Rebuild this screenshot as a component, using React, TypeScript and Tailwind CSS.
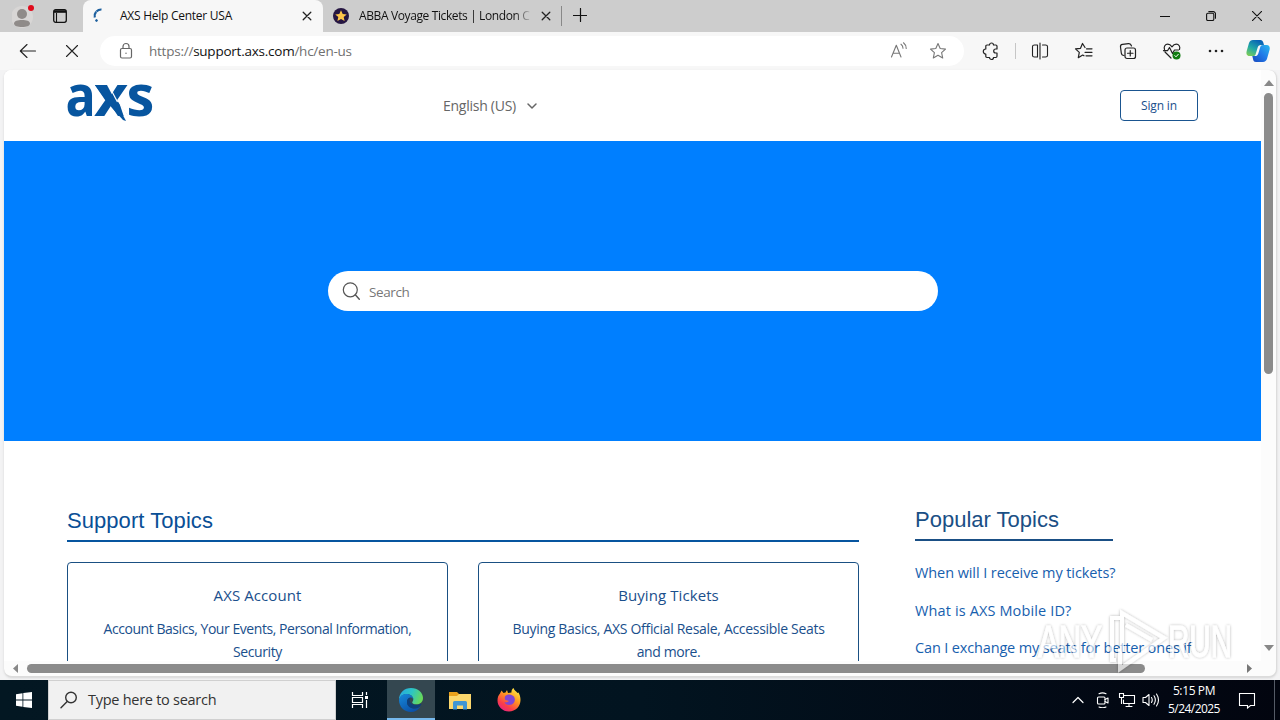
import React from "react";

type IconProps = { className?: string; children: React.ReactNode; size?: number };

function Icon({ className = "", children, size = 20 }: IconProps) {
  return (
    <svg
      width={size}
      height={size}
      viewBox={`0 0 ${size} ${size}`}
      fill="none"
      stroke="currentColor"
      strokeWidth="1.1"
      strokeLinecap="round"
      strokeLinejoin="round"
      className={`shrink-0 ${className}`}
    >
      {children}
    </svg>
  );
}

const STAR = "M10 2.6l2.2 4.9 5.3.6-3.9 3.6 1.1 5.3-4.7-2.7-4.7 2.7 1.1-5.3-3.9-3.6 5.3-.6z";

function TitleBar() {
  return (
    <div className="flex h-8 bg-[#cdcdcd]">
      <div className="flex w-[83px] items-center rounded-br-md pl-3">
        <svg width="22" height="26" viewBox="0 0 22 26" className="shrink-0">
          <circle cx="10" cy="14" r="11" fill="#d8d6d5" />
          <circle cx="10" cy="11" r="5" fill="#8f8b89" />
          <path d="M2 20.500c0-2.500 3.500-3.500 8-3.500s8 1 8 3.500-3.500 3.500-8 3.500-8-1-8-3.500z" fill="#8f8b89" />
          <circle cx="19" cy="5" r="3" fill="#e00b1c" />
        </svg>
        <svg width="14" height="14" viewBox="0 0 14 14" className="ml-[19px] shrink-0" fill="none" stroke="#111">
          <rect x=".7" y=".7" width="12.600" height="12.600" rx="2" strokeWidth="1.300" />
          <path d="M1 2.500h12" strokeWidth="2.600" />
          <path d="M3.500 4v9" strokeWidth="1.100" />
        </svg>
      </div>
      <div className="flex w-[240px] items-center rounded-t-lg bg-[#f7f7f7] pl-2">
        <svg width="16" height="16" viewBox="0 0 16 16" fill="none" stroke="#1c5f9e" className="shrink-0">
          <path d="M3.800 9.500A6.500 6.500 0 0 1 10.500 1.500" strokeWidth="2.200" strokeDasharray="6 .5" />
          <circle cx="5.500" cy="12.500" r=".9" fill="#1c5f9e" />
        </svg>
        <span className="ml-[13px] flex-1 text-[12px] tracking-[-0.26px] whitespace-nowrap text-[#111]">AXS Help Center USA</span>
        <Icon size={10} className="mr-[11px] text-[#222]"><path d="M1.200 1.200l7.600 7.600M8.800 1.200l-7.600 7.600" strokeWidth="1.300" /></Icon>
      </div>
      <div className="flex w-[238px] items-center pl-[10px]">
        <svg width="16" height="16" viewBox="0 0 16 16" className="shrink-0">
          <circle cx="8" cy="8" r="8" fill="#261642" />
          <path d="M8 2.200l1.700 3.700 4 .5-3 2.700.9 4L8 11l-3.600 2.100.9-4-3-2.700 4-.5z" fill="#fdc54a" />
        </svg>
        <span className="ml-[10px] w-[173px] bg-linear-to-r from-[#111] from-90% to-transparent bg-clip-text text-[12px] tracking-[-0.38px] whitespace-nowrap text-transparent">
          ABBA Voyage Tickets | London C
        </span>
        <Icon size={10} className="ml-[9px] text-[#222]"><path d="M1.200 1.200l7.600 7.600M8.800 1.200l-7.600 7.600" strokeWidth="1.300" /></Icon>
      </div>
      <div className="mt-[6px] h-5 w-px bg-[#888]" />
      <Icon size={14} className="mt-[8px] ml-[11px] text-[#111]"><path d="M7.500.5v13M.5 7.500h13" strokeWidth="1.200" /></Icon>
      <div className="ml-auto flex items-center gap-9 pr-[18px] text-[#111]">
        <Icon size={10}><path d="M0 5.500h10" /></Icon>
        <Icon size={10}>
          <rect x=".6" y="2.300" width="7.200" height="7.200" rx="1.300" />
          <path d="M2.800.6h4.400a2.300 2.300 0 0 1 2.300 2.300v4.400" />
        </Icon>
        <Icon size={10}><path d="M.4.4l9.200 9.200M9.600.4L.4 9.600" /></Icon>
      </div>
    </div>
  );
}

function Toolbar() {
  return (
    <div className="flex h-[38px] items-center bg-[#f7f7f7] text-[#222]">
      <Icon className="ml-[18px]"><path d="M17.500 10H2.500M9 3.500L2.300 10 9 16.500" /></Icon>
      <Icon className="ml-6"><path d="M4.500 4.500l11 11M15.500 4.500l-11 11" /></Icon>
      <div className="ml-[18px] flex h-[30px] w-[864px] items-center rounded-full bg-white pl-[18px] text-[#666]">
        <svg width="16" height="18" viewBox="0 0 16 18" fill="none" stroke="#666" strokeWidth="1.200">
          <rect x="2.500" y="6.500" width="11" height="9.500" rx="1.500" />
          <path d="M5 6.500V4.500a3 3 0 0 1 6 0v2" />
          <circle cx="8" cy="11.300" r=".7" fill="#666" stroke="none" />
        </svg>
        <span className="ml-[15px] text-[13.500px] tracking-[-0.24px] whitespace-nowrap text-[#707070]">
          https://<span className="text-[#111]">support.axs.com</span>/hc/en-us
        </span>
        <Icon className="ml-auto text-[#777]">
          <path d="M2.500 16L7.300 4.200 12 16M4.100 12.300h6.400M12 3.200c1.400 1 2 2.300 2 4M14.500 1.800c1.900 1.500 2.700 3.300 2.700 5.600" />
        </Icon>
        <Icon className="mr-[16px] ml-[19px] text-[#777]"><path d={STAR} /></Icon>
      </div>
      <Icon className="ml-[17px]">
        <path d="M6 4h2.500a2 2 0 0 1 4 0h2.300q1.200 0 1.200 1.200V8h-1.300a2 2 0 0 0 0 4H16v3.300q0 1.200-1.200 1.200h-2.300a2 2 0 0 1-4 0H6q-1.200 0-1.200-1.200V13a2.500 2.500 0 0 1 0-5V5.200Q4.800 4 6 4z" strokeWidth="1.200" />
      </Icon>
      <div className="ml-[14px] h-4 w-px bg-[#c6c6c6]" />
      <Icon className="ml-[14px]">
        <path d="M7.500 4H4.500Q2.500 4 2.500 5.500v9Q2.500 16 4.500 16h3zM12.500 4h3Q17.500 4 17.500 5.500v9q0 1.500-2 1.500h-3M10 2v16" strokeWidth="1.100" />
      </Icon>
      <Icon className="ml-[24px]">
        <path d="M11 6.500L8.500 2.500 6.500 7.300l-5 .6 3.800 3.500-1 5.300L8.700 14l1.300.8M12.500 7.800H18M11 11.300h7M12 14.800h6" strokeWidth="1.200" />
      </Icon>
      <Icon className="ml-[24px]">
        <path d="M6 14.500c-1.800 0-2.500-1-2.700-2.500L2.500 6c-.2-1.400.7-2.400 2-2.600l6-.8c1.500-.2 2.500.6 3 2.400" strokeWidth="1.200" />
        <rect x="7" y="7" width="10.500" height="10.500" rx="2" strokeWidth="1.200" />
        <path d="M12.250 9.500v5.500M9.500 12.250h5.500" strokeWidth="1.200" />
      </Icon>
      <Icon className="ml-[24px]">
        <path d="M2.500 8.500c-1-3 .7-5.300 3.200-5.300 2 0 3.300 1.200 4.300 2.600 1-1.400 2.300-2.600 4.300-2.600 2.500 0 4.200 2.300 3.200 5.300M3 11l6 6M1.500 9.700h4l2-3.200 3 6 2-3.500h4" strokeWidth="1.200" />
        <circle cx="14.500" cy="14.500" r="4" fill="#107c10" stroke="none" />
        <path d="M12.800 14.600l1.200 1.200 2.300-2.500" stroke="#fff" strokeWidth="1" />
      </Icon>
      <Icon className="ml-[24px]">
        <g fill="currentColor" stroke="none"><circle cx="4" cy="10" r="1.300" /><circle cx="10" cy="10" r="1.300" /><circle cx="16" cy="10" r="1.300" /></g>
      </Icon>
      <svg width="24" height="24" viewBox="0 0 24 24" className="ml-[20px] shrink-0">
        <defs>
          <linearGradient id="cpa" x1="0" y1="1" x2=".6" y2="0"><stop offset="0" stopColor="#8bd24a" /><stop offset=".5" stopColor="#22a9a6" /><stop offset="1" stopColor="#0863b5" /></linearGradient>
          <linearGradient id="cpb" x1="0" y1="1" x2="1" y2="0"><stop offset="0" stopColor="#1748bd" /><stop offset=".5" stopColor="#2079e8" /><stop offset="1" stopColor="#28b9ed" /></linearGradient>
        </defs>
        <path d="M7 1h7.500c1.600 0 2.300 1 2.700 2.300l.8 2.700h-3c-2 0-2.900 1-3.400 2.700l-1.900 6.300c-.4 1.400-1 2-2.500 2H3.500C.6 17 0 14.500.7 12L3 4C3.700 2 5 1 7 1z" fill="url(#cpa)" />
        <path d="M17 23H10c-1.700 0-2.400-1-2.800-2.300L6.300 17h2.500c2 0 3-1 3.500-2.600l1.900-6.200C14.600 6.700 15.500 6 17 6h3.700c2.900 0 3.500 2.500 2.800 5l-2.400 8.500C20.500 21.700 19 23 17 23z" fill="url(#cpb)" />
      </svg>
    </div>
  );
}

function AxsLogo() {
  return (
    <svg width="88" height="42" viewBox="0 0 88 42" className="shrink-0" fill="#07559f">
      <g fontFamily="Open Sans, sans-serif" fontWeight="700" fontSize="57">
        <text transform="translate(-1.500 34) scale(.88 1)">a</text>
        <text transform="translate(27 34) scale(1.040 1)">x</text>
        <text transform="translate(59.500 34) scale(.98 1)">s</text>
      </g>
      <path d="M52 20l10 15h-5z" fill="#fff" />
      <path d="M28 3h12l19 36-3-1-11-12z" />
      <path d="M41.500 3l9 17" stroke="#fff" strokeWidth="1.200" />
    </svg>
  );
}

function SiteHeader() {
  return (
    <header className="flex h-[71px] shrink-0 bg-white pl-[63px]">
      <div className="mt-[12px] w-[376px]"><AxsLogo /></div>
      <div className="flex h-[71px] items-center gap-[10px] text-[#666]">
        <span className="text-[14px] tracking-[-0.26px] whitespace-nowrap">English (US)</span>
        <Icon size={12} className="mt-[1px]"><path d="M2 4l4 4 4-4" strokeWidth="1.500" /></Icon>
      </div>
      <button className="mt-[20px] mr-[63px] ml-auto h-[31px] w-[78px] rounded border border-[#1a5590] text-[12px] tracking-[-0.15px] text-[#1a4f8c]">Sign in</button>
    </header>
  );
}

function TopicCard({ title, lines }: { title: string; lines: React.ReactNode[] }) {
  return (
    <div className="h-[140px] w-[381px] rounded border border-[#1a5083] pt-[20px] text-center text-[#1a4f8c]">
      <div className="text-[15px] leading-6 tracking-[0.08px]">{title}</div>
      <div className="mt-[10px] text-[14px] leading-[23px] whitespace-nowrap">
        {lines.map((line, i) => <div key={i}>{line}</div>)}
      </div>
    </div>
  );
}

function HelpCenter() {
  return (
    <main className="flex h-[591px] w-[1257px] flex-col overflow-hidden bg-white">
      <SiteHeader />
      <section className="flex h-[300px] shrink-0 items-center justify-center bg-[#007fff]">
        <div className="ml-[1px] flex h-10 w-[610px] items-center rounded-full bg-white pl-[13px]">
          <Icon className="text-[#555]"><circle cx="9.300" cy="8.800" r="7" strokeWidth="1.200" /><path d="M14.300 13.800l4 4.500" strokeWidth="1.400" /></Icon>
          <span className="mt-[2px] ml-[8px] text-[13.500px] tracking-[-0.4px] text-[#777]">Search</span>
        </div>
      </section>
      <section className="flex pt-[63px] pl-[63px]">
        <div className="w-[792px]">
          <h2 className="h-[38px] border-b-2 border-[#07559f] pt-px font-['Liberation_Sans',sans-serif] text-[22px] leading-[32px] tracking-[0.06px] text-[#0a4f96]">Support Topics</h2>
          <div className="mt-5 flex gap-[30px]">
            <TopicCard title="AXS Account" lines={[<span className="tracking-[-0.45px]">Account Basics, Your Events, Personal Information,</span>, <span className="tracking-[-0.4px]">Security</span>]} />
            <TopicCard title="Buying Tickets" lines={[<span className="tracking-[-0.31px]">Buying Basics, AXS Official Resale, Accessible Seats</span>, <span className="tracking-[-0.4px]">and more.</span>]} />
          </div>
        </div>
        <div className="ml-14 whitespace-nowrap">
          <h2 className="h-[37px] w-[198px] border-b-2 border-[#1a4f85] font-['Liberation_Sans',sans-serif] text-[22px] leading-[32px] text-[#1a4f85]">Popular Topics</h2>
          <ul className="mt-[20px] text-[14.500px] leading-[24px] text-[#1760ae]">
            <li className="mb-[14px] tracking-[-0.09px]">When will I receive my tickets?</li>
            <li className="mb-[13px] tracking-[0.13px]">What is AXS Mobile ID?</li>
            <li className="tracking-[-0.15px]">Can I exchange my seats for better ones if</li>
          </ul>
        </div>
      </section>
    </main>
  );
}

function Viewport() {
  return (
    <div className="mx-1 h-[607px] w-[1273px] overflow-hidden rounded-lg border-r border-b border-[#dcdcdc] bg-[#fcfcfc] shadow-sm">
      <div className="flex">
        <HelpCenter />
        <div className="flex h-[591px] w-[15px] flex-col items-center pt-[10px]">
          <svg width="10" height="6" viewBox="0 0 10 6"><path d="M5 0l5 6H0z" fill="#888" /></svg>
          <div className="mt-[7px] h-[281px] w-[9px] rounded-full bg-[#8b8b8b]" />
          <svg width="10" height="6" viewBox="0 0 10 6" className="mt-auto mb-[10px]"><path d="M5 6l5-6H0z" fill="#888" /></svg>
        </div>
      </div>
      <div className="flex h-[15px] items-center pl-[9px]">
        <svg width="5" height="9" viewBox="0 0 5 9"><path d="M0 4.500L5 0v9z" fill="#888" /></svg>
        <div className="ml-[9px] h-[9px] w-[1118px] rounded-full bg-[#8b8b8b]" />
        <svg width="5" height="9" viewBox="0 0 5 9" className="ml-[102px]"><path d="M5 4.500L0 0v9z" fill="#777" /></svg>
      </div>
    </div>
  );
}

function Watermark() {
  return (
    <svg width="200" height="72" viewBox="0 0 200 72" className="absolute top-[606px] left-[1036px]">
      <defs>
        <filter id="wm" x="-10%" y="-10%" width="120%" height="120%"><feDropShadow dx="0" dy="0" stdDeviation="1.400" floodColor="#000" floodOpacity=".45" /></filter>
      </defs>
      <g filter="url(#wm)" opacity=".65" fill="#fff" stroke="#fff" strokeWidth="1">
        <text x="2" y="51" fontFamily="Liberation Sans, sans-serif" fontSize="45" textLength="64" lengthAdjust="spacingAndGlyphs">ANY</text>
        <text x="132" y="51" fontFamily="Liberation Sans, sans-serif" fontSize="45" textLength="64" lengthAdjust="spacingAndGlyphs">RUN</text>
        <path d="M86 46V7l42 25-44 31V42M90 19l26 15M84 12h-8v42h4" fill="none" strokeWidth="4" />
      </g>
    </svg>
  );
}

function EdgeIcon() {
  return (
    <svg width="24" height="24" viewBox="0 0 24 24" className="mt-[2px]">
      <defs>
        <linearGradient id="ea" x1="0" y1=".2" x2="1" y2=".5"><stop offset="0" stopColor="#27a8e0" /><stop offset=".5" stopColor="#2cc5c5" /><stop offset="1" stopColor="#68d957" /></linearGradient>
        <linearGradient id="eb" x1="0" y1="0" x2=".7" y2="1"><stop offset="0" stopColor="#1689da" /><stop offset="1" stopColor="#0b4ea5" /></linearGradient>
      </defs>
      <path d="M0 12C0 4.500 5.500 0 12 0c7 0 12 4.700 12 10 0 4-3 6.300-6.500 6.300-3 0-4.300-1-4.300-1.800 0-.7 1.100-1.200 1.100-3.200C14.300 8.500 11.500 6 7.500 6 4 6 1.200 8.300 0 12z" fill="url(#ea)" />
      <path d="M0 12c1-4.500 4-6 7.500-6 4 0 6.800 2.500 6.800 5.300-.6-1.300-1.700-1.800-2.800-1.800-2.300 0-3.500 2.200-3.500 4.500 0 4 4 6.500 8 6.500 2 0 4-.8 5.500-2C19.500 22 16 24 12 24 5 24 0 18.500 0 12z" fill="url(#eb)" />
      <path d="M8 14c0-2.300 1.200-4.500 3.500-4.500-2 2.500-.8 7.500 6 7.500 1.500 0 2.800-.3 4-1 .7-.3 1 .3.500 1-1.500 2.400-4 3.500-6.500 3.500C11 20.500 8 18 8 14z" fill="#0d3f7d" />
    </svg>
  );
}

function FolderIcon() {
  return (
    <svg width="22" height="19" viewBox="0 0 22 19">
      <path d="M0 1h8l2 2h12v4H0z" fill="#e9a11d" />
      <path d="M0 5h8l2-2h12v15H0z" fill="#fbd76d" />
      <path d="M4 18.500v-7Q4 10 5.500 10h11q1.500 0 1.500 1.500v7h-4V14.500H8v4z" fill="#3f96d4" />
    </svg>
  );
}

function FirefoxIcon() {
  return (
    <svg width="24" height="24" viewBox="0 0 24 24">
      <defs>
        <linearGradient id="ff" x1=".85" y1="0" x2=".2" y2="1"><stop offset="0" stopColor="#fff14a" /><stop offset=".4" stopColor="#ff9a20" /><stop offset=".75" stopColor="#fb3d49" /><stop offset="1" stopColor="#e6208a" /></linearGradient>
      </defs>
      <path d="M3 5.500L4.500 2.500 6.500 5l2-.5L10 2l1 3 3.500-.5C14.300 2.500 15 1 16.500 0c.5 2.500 2.800 3.300 4 5l1-.500c1.300 2 2 4.800 2 7.500C23.500 18.500 18.500 23.500 12 23.500S.5 18.500.5 12.500C.5 9.500 1.300 7.300 3 5.500z" fill="url(#ff)" />
      <path d="M8 8.500c2-2.500 5-2.500 7.500-1 2 1.200 2.500 3 2.300 4.800-.3 3-2.800 4.700-5.500 4.700-2.500 0-4.300-1.300-4.800-3 1.500.8 3 .5 4.500-1-1-.5-2.500-.3-3.500-1-.8-.7-1-2.300-.5-3.500z" fill="#8046d5" />
    </svg>
  );
}

function Taskbar() {
  return (
    <div className="mt-auto flex h-10 items-center bg-linear-to-r from-[#031722] via-[#021420] to-[#02050f] text-white">
      <div className="flex w-12 justify-center">
        <svg width="16" height="16" viewBox="0 0 16 16" fill="#fff"><path d="M0 2.200l6.500-1V7.600H0zM7.300 1.100L16 0v7.600H7.300zM0 8.400h6.500v6.400l-6.500-1zM7.300 8.400H16V16l-8.700-1.100z" /></svg>
      </div>
      <div className="flex h-10 w-[288px] items-center border border-[#d0d0d0] bg-[#f1f1f1] pl-[11px] text-[#333]">
        <Icon size={18}><circle cx="11" cy="6.500" r="5.300" strokeWidth="1.400" /><path d="M7.200 10.500L1 16.800" strokeWidth="1.400" /></Icon>
        <span className="ml-[10px] text-[14.500px] tracking-[-0.27px] whitespace-nowrap">Type here to search</span>
      </div>
      <div className="flex w-[51px] justify-center pr-[4px]">
        <svg width="18" height="16" viewBox="0 0 18 16" fill="none" stroke="#fff" strokeWidth="1.200">
          <path d="M1.500 0v3.500h10V0M1.500 16v-3.500h10V16M1.500 5.500v5h10v-5zM15.500 0v3M15.500 8v8" />
          <rect x="14" y="4" width="3" height="3" fill="#fff" stroke="none" />
        </svg>
      </div>
      <div className="flex h-10 w-12 items-center justify-center border-b-2 border-[#76b9ed] bg-[#344750]"><EdgeIcon /></div>
      <div className="flex w-[50px] justify-center"><FolderIcon /></div>
      <div className="flex w-12 justify-center"><FirefoxIcon /></div>
      <div className="ml-auto flex h-10 items-center">
        <Icon size={12}><path d="M1 8.500l5-5 5 5" strokeWidth="1.200" /></Icon>
        <Icon size={16} className="ml-[11px]"><rect x="2.500" y="5" width="7.500" height="7" rx="1" /><path d="M10 7.500l3-1.500v5l-3-1.500M4 1.700Q7.500 0 11 1.700M4 15q3.500 1.700 7 0" /></Icon>
        <Icon size={18} className="ml-[7px]"><path d="M6 4.500h10.500v8H5.500V9M8 15.500h6M11 12.500v3M1.500 2.500h4v4h-4zM3.500 6.500v6" strokeLinejoin="miter" /></Icon>
        <Icon size={18} className="ml-[6px]"><path d="M1 6.500h2.500L7 3.500v11l-3.500-3H1zM9.500 6.500q1.500 2.500 0 5M12 4.800q2.700 4.200 0 8.400M14.500 3q4 6 0 12" /></Icon>
        <div className="ml-[6px] w-[56px] text-center text-[12px] leading-[18px] whitespace-nowrap">
          <div className="tracking-[-0.38px]">5:15 PM</div>
          <div className="tracking-[-0.55px]">5/24/2025</div>
        </div>
        <Icon size={18} className="ml-[16px]"><path d="M1.500 2.500h15v12h-4l-3 2.500v-2.500h-8z" strokeLinejoin="miter" /></Icon>
        <div className="ml-[18px] h-10 w-px bg-[#555b66]" />
        <div className="w-[5px]" />
      </div>
    </div>
  );
}

export default function App() {
  return (
    <div className="relative flex h-[720px] w-[1280px] flex-col overflow-hidden bg-[#f3f3f4] font-['Open_Sans','Noto_Sans',sans-serif]">
      <TitleBar />
      <Toolbar />
      <Viewport />
      <Taskbar />
      <Watermark />
    </div>
  );
}
